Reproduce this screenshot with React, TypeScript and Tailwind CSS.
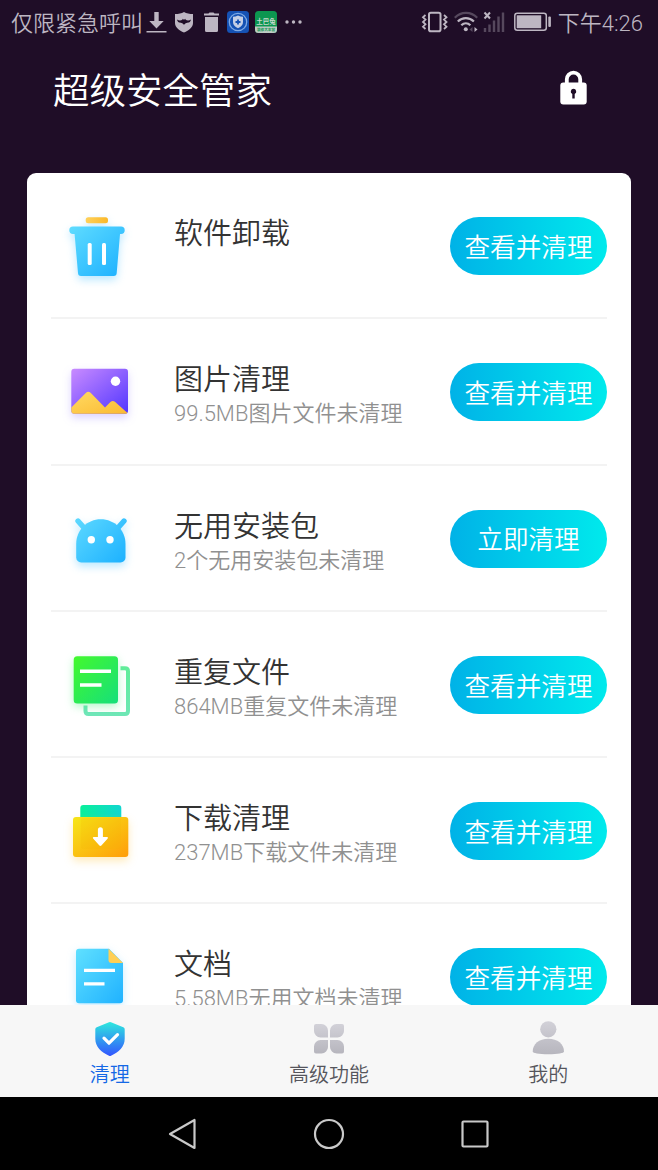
import React, { useState } from 'react';

interface CleanItem {
  id: string;
  title: string;
  description?: string;
  action: string;
  icon: React.ReactNode;
}

const TrashIcon = () => (
  <svg className="size-24 shrink-0 overflow-visible" viewBox="0 0 96 96">
    <defs>
      <linearGradient id="trash-body" x1="0" y1="0" x2="1" y2="1">
        <stop offset="0" stopColor="#5fdcff" />
        <stop offset="1" stopColor="#1cb0ff" />
      </linearGradient>
      <linearGradient id="trash-handle" x1="0" y1="0" x2="1" y2="0">
        <stop offset="0" stopColor="#ffd15a" />
        <stop offset="1" stopColor="#fbb829" />
      </linearGradient>
    </defs>
    <g className="drop-shadow-[0_4px_4px_rgba(60,190,255,0.35)]">
      <rect x="34.7" y="19.3" width="22.3" height="6" rx="2.5" fill="url(#trash-handle)" />
      <path
        d="M22 28.5h48a3.7 3.7 0 0 1 0 7.4h-1l-3.3 39.2a3 3 0 0 1-3 2.9H30a3 3 0 0 1-3-2.9L23.6 35.9H22a3.7 3.7 0 0 1 0-7.4z"
        fill="url(#trash-body)"
      />
    </g>
    <rect x="36.7" y="45" width="4" height="22" rx="1.5" fill="#fff" />
    <rect x="51" y="45" width="4" height="22" rx="1.5" fill="#fff" />
  </svg>
);

const PictureIcon = () => (
  <svg className="size-24 shrink-0 overflow-visible" viewBox="0 0 96 96">
    <defs>
      <linearGradient id="picture-bg" x1="0" y1="0" x2="1" y2="1">
        <stop offset="0" stopColor="#c98bff" />
        <stop offset="1" stopColor="#5136ff" />
      </linearGradient>
      <linearGradient id="picture-hill" x1="0" y1="0" x2="1" y2="1">
        <stop offset="0" stopColor="#ffda62" />
        <stop offset="1" stopColor="#fbba32" />
      </linearGradient>
    </defs>
    <rect
      className="drop-shadow-[0_4px_4px_rgba(110,80,255,0.25)]"
      x="20.3" y="24.7" width="56.7" height="45" rx="3"
      fill="url(#picture-bg)"
    />
    <path
      d="M20.3 63.5L35 48.8q2.3-2 4.6 0L54 63.5l5.4-5.6q2.4-2 4.8 0L76.5 69q-.7.7-2 .7H23.3q-3 0-3-3z"
      fill="url(#picture-hill)"
    />
    <circle cx="64.5" cy="37.2" r="4.7" fill="#fff" />
  </svg>
);

const AndroidIcon = () => (
  <svg className="size-24 shrink-0 overflow-visible" viewBox="0 0 96 96">
    <defs>
      <linearGradient id="android-body" gradientUnits="userSpaceOnUse" x1="26" y1="28" x2="72" y2="72">
        <stop offset="0" stopColor="#5cd8ff" />
        <stop offset="1" stopColor="#1eb2ff" />
      </linearGradient>
    </defs>
    <g className="drop-shadow-[0_4px_4px_rgba(60,190,255,0.35)]">
      <path d="M27 30l8 9M73 30l-8 9" stroke="url(#android-body)" strokeWidth="5.4" strokeLinecap="round" />
      <path
        d="M25.2 53c0-14 11-24.7 24.6-24.7S74.5 39 74.5 53v13.5a5 5 0 0 1-5 5H30.2a5 5 0 0 1-5-5z"
        fill="url(#android-body)"
      />
    </g>
    <circle cx="40.3" cy="48.8" r="3.7" fill="#fff" />
    <circle cx="59" cy="48.8" r="3.7" fill="#fff" />
  </svg>
);

const DuplicateIcon = () => (
  <svg className="size-24 shrink-0 overflow-visible" viewBox="0 0 96 96">
    <defs>
      <linearGradient id="duplicate-front" x1="0" y1="0" x2="1" y2="1">
        <stop offset="0" stopColor="#43f92c" />
        <stop offset="1" stopColor="#16df7b" />
      </linearGradient>
      <linearGradient id="duplicate-back" gradientUnits="userSpaceOnUse" x1="76" y1="31" x2="60" y2="79">
        <stop offset="0" stopColor="#62ed9b" />
        <stop offset="1" stopColor="#6fe6b8" />
      </linearGradient>
    </defs>
    <path
      d="M69.5 31.2H74q3 0 3 3V74q0 3-3 3H37.5q-3 0-3-3v-5.5"
      fill="none"
      stroke="url(#duplicate-back)"
      strokeWidth="4"
    />
    <rect
      className="drop-shadow-[0_3px_4px_rgba(40,235,100,0.35)]"
      x="22.7" y="19.2" width="44.3" height="47.2" rx="3.5"
      fill="url(#duplicate-front)"
    />
    <path d="M29 34.3h31M29 48h21.5" stroke="#fff" strokeWidth="3.5" />
  </svg>
);

const DownloadFolderIcon = () => (
  <svg className="size-24 shrink-0 overflow-visible" viewBox="0 0 96 96">
    <defs>
      <linearGradient id="folder-tab" x1="0" y1="0" x2="1" y2="0">
        <stop offset="0" stopColor="#0af09a" />
        <stop offset="1" stopColor="#11d6cf" />
      </linearGradient>
      <linearGradient id="folder-front" x1="0" y1="0" x2="1" y2="1">
        <stop offset="0" stopColor="#f6e617" />
        <stop offset="1" stopColor="#ff9d0a" />
      </linearGradient>
    </defs>
    <rect x="29.3" y="22" width="41" height="30" rx="3" fill="url(#folder-tab)" />
    <rect
      className="drop-shadow-[0_4px_4px_rgba(255,190,30,0.3)]"
      x="22" y="34" width="55.3" height="40" rx="3"
      fill="url(#folder-front)"
    />
    <rect x="30" y="35" width="40" height="31" rx="2" fill="#f0b400" opacity=".15" />
    <path
      d="M49.4 44.2a2.5 2.5 0 0 1 2.5 2.5V54h4.3q1.3.3.5 1.5l-6.3 7q-1 .9-2 0l-6.3-7q-.8-1.2.5-1.500h4.3v-7.3a2.5 2.5 0 0 1 2.5-2.5z"
      fill="#fff"
    />
  </svg>
);

const DocumentIcon = () => (
  <svg className="size-24 shrink-0 overflow-visible" viewBox="0 0 96 96">
    <defs>
      <linearGradient id="document-body" x1="0" y1="0" x2="1" y2="1">
        <stop offset="0" stopColor="#5fe0ff" />
        <stop offset="1" stopColor="#20b2ff" />
      </linearGradient>
    </defs>
    <path
      className="drop-shadow-[0_3px_4px_rgba(60,190,255,0.3)]"
      d="M28 19.700h30L72 34v37.200a3 3 0 0 1-3 3H28a3 3 0 0 1-3-3V22.700a3 3 0 0 1 3-3z"
      fill="url(#document-body)"
    />
    <path d="M57.5 19.7L72 34H60.5a3 3 0 0 1-3-3z" fill="#ffcf55" />
    <path d="M33 41.3h31M33 54.8h20.5" stroke="#fff" strokeWidth="3.3" />
  </svg>
);

const items: CleanItem[] = [
  { id: 'uninstall', title: '软件卸载', action: '查看并清理', icon: <TrashIcon /> },
  { id: 'images', title: '图片清理', description: '99.5MB图片文件未清理', action: '查看并清理', icon: <PictureIcon /> },
  { id: 'packages', title: '无用安装包', description: '2个无用安装包未清理', action: '立即清理', icon: <AndroidIcon /> },
  { id: 'duplicates', title: '重复文件', description: '864MB重复文件未清理', action: '查看并清理', icon: <DuplicateIcon /> },
  { id: 'downloads', title: '下载清理', description: '237MB下载文件未清理', action: '查看并清理', icon: <DownloadFolderIcon /> },
  { id: 'documents', title: '文档', description: '5.58MB无用文档未清理', action: '查看并清理', icon: <DocumentIcon /> },
];

const StatusBar = () => (
  <div className="flex h-11 shrink-0 items-center pr-[15px] pl-[11px] text-[22px] leading-none text-[#bdb6c2]">
    <span className="w-[135px] pt-[3px] whitespace-nowrap">仅限紧急呼叫</span>
    <svg className="h-6 w-[21px]" viewBox="0 0 21 24" fill="currentColor">
      <path d="M8.3 2h4.4v9h5l-7.2 7.500L3.300 11h5zM.5 21h20v1.500H.5z" />
    </svg>
    <svg className="ml-[7px] h-6 w-5" viewBox="0 0 20 24">
      <path d="M10 2c2.500 1.500 5.500 2 9 2v9c0 4-4 7.500-9 9.500C5 20.500 1 17 1 13V4c3.500 0 6.500-.5 9-2z" fill="currentColor" />
      <path d="M3 9.500c2 1.300 4 1 5.300.3l.5-1 .6.700h1.200l.6-.7.500 1c1.300.7 3.300 1 5.300-.3-.3 2-1.500 3.300-3.800 3.300-1 0-2 .7-3.200 2-1.200-1.300-2.200-2-3.200-2C4.500 12.800 3.300 11.500 3 9.500z" fill="#1f0d27" />
    </svg>
    <svg className="ml-[9px] h-6 w-[17px]" viewBox="0 0 17 24" fill="currentColor">
      <path d="M1 3.500h4.500l1-1h4l1 1H16v2H1zM2 7h13v13.500q0 1.500-1.500 1.500h-10Q2 22 2 20.500z" />
    </svg>
    <svg className="ml-[7px] size-[22px]" viewBox="0 0 22 22">
      <rect width="22" height="22" rx="3.5" fill="#1552b4" />
      <circle cx="11" cy="11" r="8.700" fill="none" stroke="#7eaae5" strokeWidth="1.3" />
      <path d="M11 4.500q2.500 1.200 5 1.200V11q0 4-5 6.200Q6 15 6 11V5.700q2.500 0 5-1.200z" fill="#c4cfe5" />
      <path d="M11 8.500v5M8.500 11h5" stroke="#1552b4" strokeWidth="1.8" />
    </svg>
    <svg className="ml-[6px] size-[22px]" viewBox="0 0 22 22">
      <rect width="22" height="22" rx="3.5" fill="#0c9650" />
      <path d="M0 15.500h22v3a3.500 3.500 0 0 1-3.500 3.500h-15A3.500 3.500 0 0 1 0 18.500z" fill="#bdcbc4" />
      <text x="11" y="12.5" textAnchor="middle" fontSize="6.5" fontWeight="700" fill="#c5d9cd">土巴兔</text>
      <text x="11" y="20.2" textAnchor="middle" fontSize="3.6" fontWeight="700" fill="#0c9650">装修大本营</text>
    </svg>
    <svg className="ml-2 h-6 w-[18px]" viewBox="0 0 18 24" fill="currentColor">
      <circle cx="2" cy="12" r="1.7" />
      <circle cx="8.500" cy="12" r="1.7" />
      <circle cx="15" cy="12" r="1.7" />
    </svg>

    <svg className="ml-auto h-6 w-[27px]" viewBox="0 0 27 24" fill="none" stroke="currentColor">
      <rect x="8" y="2.8" width="11.5" height="18.400" rx="1.8" strokeWidth="2" />
      <path d="M4.500 5L2 7.300l2.500 2.300L2 12l2.500 2.300L2 16.700 4.500 19M23 5l2.500 2.300L23 9.600l2.500 2.400-2.500 2.300 2.500 2.400L23 19" strokeWidth="1.8" />
    </svg>
    <svg className="ml-1.5 h-6 w-6" viewBox="0 0 24 24" fill="none" stroke="currentColor" strokeWidth="2.2">
      <path d="M.8 7.800C7 1.300 17 1.300 23.200 7.800" opacity=".35" />
      <path d="M3.800 11.500c4.700-4.600 11.400-4.600 16.100 0M7.300 15.300c2.700-2.700 6.400-2.700 9.100 0" />
      <circle cx="11.8" cy="19.3" r="2" fill="currentColor" stroke="none" />
      <path d="M20.500 17l3 2.500-3 2.500z" fill="currentColor" stroke="none" />
      <path d="M18.500 17l-3 2.500 3 2.500z" fill="currentColor" stroke="none" opacity=".35" />
    </svg>
    <svg className="ml-[5px] h-6 w-[22px]" viewBox="0 0 22 24" fill="none" stroke="currentColor" strokeWidth="2.4">
      <path d="M1.500 2.500l5.500 6M7 2.500l-5.500 6" strokeWidth="2" />
      <path d="M2 18v4M6.500 14.500V22M11 10.500V22M15.500 6.500V22M20 2.500V22" opacity=".35" />
    </svg>
    <svg className="ml-[9px] h-6 w-[37px]" viewBox="0 0 37 24">
      <rect x=".8" y="3.300" width="31.5" height="16.900" rx="2.5" fill="none" stroke="currentColor" strokeWidth="1.5" />
      <rect x="2.7" y="5.300" width="24.5" height="12.900" fill="currentColor" />
      <rect x="34.3" y="6.500" width="2.6" height="10.5" rx="1" fill="currentColor" />
    </svg>
    <span className="ml-[7px] pt-[3px] whitespace-nowrap">下午4:26</span>
  </div>
);

const CleanRow: React.FC<{ item: CleanItem }> = ({ item }) => (
  <li className="flex h-[146.25px] shrink-0 items-center border-b-2 border-[#f3f3f3] pt-0.5">
    {item.icon}
    <div className="ml-[27px] h-[84px] flex-1 pt-[13px]">
      <h2 className="text-[29px] leading-[34px] whitespace-nowrap text-[#333]">{item.title}</h2>
      <p className="text-[22px] leading-[33px] whitespace-nowrap text-[#909090]">{item.description}</p>
    </div>
    <button
      type="button"
      className="h-[58px] w-[157px] shrink-0 rounded-full bg-gradient-to-r from-[#00b2e7] to-[#00eaec] pt-[5px] text-[25.6px] leading-none whitespace-nowrap text-white"
    >
      {item.action}
    </button>
  </li>
);

const ShieldTabIcon = () => (
  <svg className="h-9 w-9" viewBox="0 0 36 36">
    <defs>
      <linearGradient id="tab-shield" x1="0" y1="0" x2="0" y2="1">
        <stop offset="0" stopColor="#2ee8de" />
        <stop offset="1" stopColor="#3355ff" />
      </linearGradient>
    </defs>
    <path d="M17 1.300q1-.5 2 0l12.300 4.900q1.400.6 1.400 2v9.500c0 8-6 13.500-13.700 17q-1 .4-2 0C9.300 31.200 3.300 25.700 3.300 17.700V8.200q0-1.400 1.400-2z" fill="url(#tab-shield)" />
    <path d="M12 17.200l5 5 8.500-8.500" fill="none" stroke="#fff" strokeWidth="3.2" strokeLinecap="round" strokeLinejoin="round" />
  </svg>
);

const FeaturesTabIcon = () => (
  <svg className="h-9 w-9" viewBox="0 0 36 36">
    <defs>
      <linearGradient id="tab-features" gradientUnits="userSpaceOnUse" x1="0" y1="3" x2="0" y2="33">
        <stop offset="0" stopColor="#d2d1d8" />
        <stop offset="1" stopColor="#b6b5bd" />
      </linearGradient>
    </defs>
    <path
      d="M5 3h5.500a6.500 6.500 0 0 1 6.500 6.500v7H9.500A6.500 6.500 0 0 1 3 10V5a2 2 0 0 1 2-2zM31 3h-5.500A6.500 6.500 0 0 0 19 9.500v7h7.500A6.500 6.500 0 0 0 33 10V5a2 2 0 0 0-2-2zM5 32.500h5.500A6.500 6.500 0 0 0 17 26v-7H9.500A6.500 6.500 0 0 0 3 25.500v5a2 2 0 0 0 2 2zM31 32.500h-5.500A6.500 6.500 0 0 1 19 26v-7h7.500a6.500 6.500 0 0 1 6.500 6.500v5a2 2 0 0 1-2 2z"
      fill="url(#tab-features)"
    />
  </svg>
);

const ProfileTabIcon = () => (
  <svg className="h-9 w-9" viewBox="0 0 36 36">
    <defs>
      <linearGradient id="tab-profile" gradientUnits="userSpaceOnUse" x1="0" y1="0" x2="0" y2="34">
        <stop offset="0" stopColor="#d2d1d8" />
        <stop offset="1" stopColor="#b6b5bd" />
      </linearGradient>
    </defs>
    <circle cx="18.3" cy="8.3" r="8.1" fill="url(#tab-profile)" />
    <path d="M2.700 30.500C2.700 23 9 17.700 18.300 17.700S34 23 34 30.500c0 1.700-6 2.700-15.700 2.700S2.700 32.200 2.700 30.500z" fill="url(#tab-profile)" />
  </svg>
);

const tabs = [
  { id: 'clean', label: '清理', icon: <ShieldTabIcon /> },
  { id: 'features', label: '高级功能', icon: <FeaturesTabIcon /> },
  { id: 'profile', label: '我的', icon: <ProfileTabIcon /> },
];

const App: React.FC = () => {
  const [activeTab, setActiveTab] = useState('clean');

  return (
    <div className="flex h-[1170px] w-[658px] flex-col overflow-hidden bg-[#1f0d27] font-['Roboto','Noto_Sans_CJK_SC',sans-serif] font-[350]">
      <StatusBar />

      <header className="flex h-[129px] shrink-0 items-start justify-between pt-[22px] pr-[71px] pl-[53px]">
        <h1 className="text-[36.5px] leading-[52px] text-white">超级安全管家</h1>
        <svg className="mt-1 h-9 w-[27px]" viewBox="0 0 27 36">
          <path d="M6.800 14V9.300a6.700 6.700 0 0 1 13.400 0V14" fill="none" stroke="#fff" strokeWidth="3.8" />
          <rect x=".3" y="12.5" width="26.4" height="22" rx="3" fill="#fff" />
          <path d="M13.500 18.700a2.800 2.800 0 0 1 1.200 5.300v4.500h-2.400V24a2.800 2.800 0 0 1 1.200-5.300z" fill="#1f0d27" />
        </svg>
      </header>

      <main className="min-h-0 flex-1 overflow-hidden px-[27px]">
        <ul className="flex flex-col rounded-[9px] bg-white px-6">
          {items.map((item) => (
            <CleanRow key={item.id} item={item} />
          ))}
        </ul>
      </main>

      {/* Bottom tabs */}
      <nav className="grid h-[92px] shrink-0 grid-cols-3 bg-[#f7f7f7]">
        {tabs.map((tab) => (
          <button
            key={tab.id}
            type="button"
            onClick={() => setActiveTab(tab.id)}
            className={`flex flex-col items-center pt-4 text-[20px] ${
              activeTab === tab.id ? 'text-[#1468e6]' : 'text-[#55555c]'
            }`}
          >
            {tab.icon}
            <span className="mt-[3px] leading-[30px]">{tab.label}</span>
          </button>
        ))}
      </nav>

      {/* System navigation */}
      <div className="flex h-[73px] shrink-0 items-center justify-center gap-[114px] bg-black">
        <svg className="size-8" viewBox="0 0 32 32" fill="none" stroke="#c9c9c9" strokeWidth="2.2" strokeLinejoin="round">
          <path d="M27.500 2v28L3 16z" />
        </svg>
        <svg className="size-8" viewBox="0 0 32 32" fill="none" stroke="#c9c9c9" strokeWidth="2.2">
          <circle cx="16" cy="16" r="14" />
        </svg>
        <svg className="size-8" viewBox="0 0 32 32" fill="none" stroke="#c9c9c9" strokeWidth="2.2">
          <rect x="3.5" y="3.5" width="25" height="25" rx="1" />
        </svg>
      </div>
    </div>
  );
};

export default App;
